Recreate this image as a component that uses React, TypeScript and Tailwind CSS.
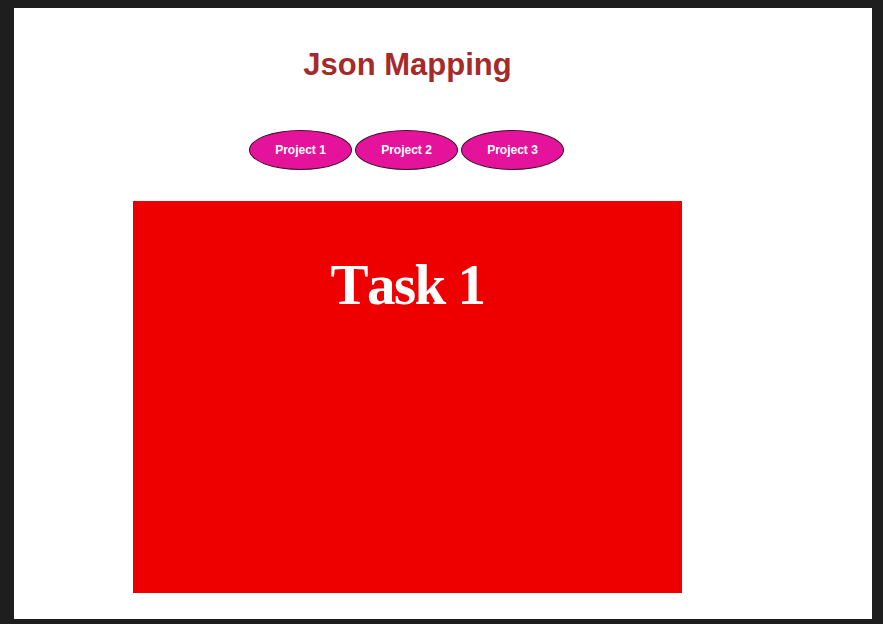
import React from "react";

export default function App() {
  const projects = ["Project 1", "Project 2", "Project 3"];
  return (
    <div className="w-[883px] h-[624px] bg-[#1e1e1e] pt-[8px] pl-[14px] overflow-hidden">
      <div className="w-[858px] h-[611px] bg-white pt-[41px]">
        <div className="w-[549px] ml-[119px] flex flex-col items-center">
          <h1 className="text-[31px] leading-none font-bold text-[#a52a2a] font-['Liberation_Sans',Arial,sans-serif]">
            Json Mapping
          </h1>
          <div className="mt-[50px] flex gap-[3px] -ml-[2px]">
            {projects.map((p) => (
              <button
                key={p}
                className="w-[103px] h-[40px] rounded-[50%] bg-[#e5139b] border border-[#3a1228] text-white text-[12px] font-bold font-['Liberation_Sans',Arial,sans-serif]"
              >
                {p}
              </button>
            ))}
          </div>
          <div className="mt-[31px] w-[549px] h-[392px] bg-[#ef0000] pt-[55px] flex justify-center">
            <div className="text-[57px] leading-none font-bold text-white tracking-[-1.5px] [font-kerning:none] font-['Liberation_Serif','Times_New_Roman',serif]">
              Task 1
            </div>
          </div>
        </div>
      </div>
    </div>
  );
}
